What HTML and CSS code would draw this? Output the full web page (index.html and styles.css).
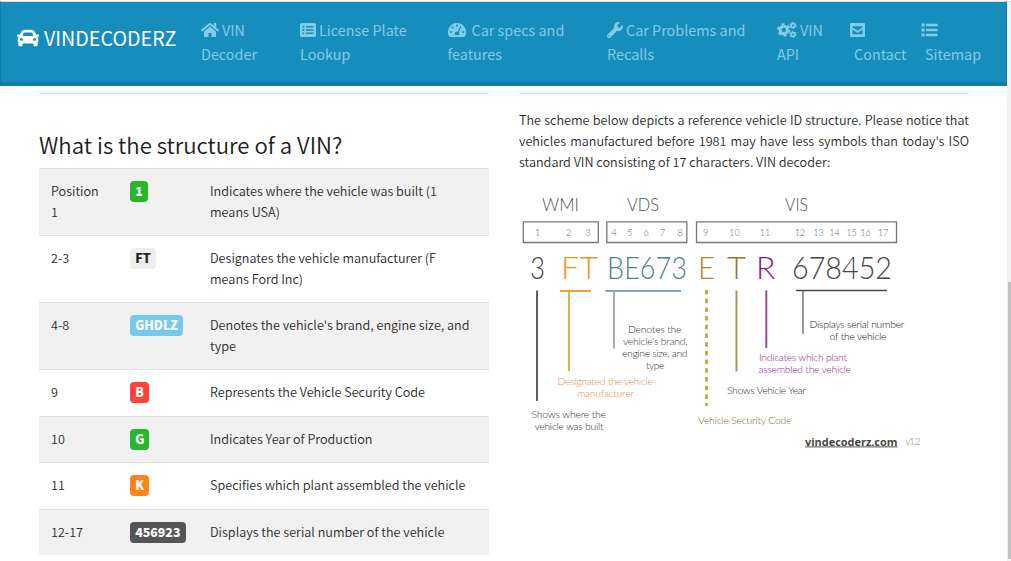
FILE: index.html
```html
<!DOCTYPE html>
<html lang="en">
<head>
<meta charset="utf-8">
<title>VINDECODERZ</title>
<link rel="stylesheet" href="styles.css">
</head>
<body>
<div class="page">
<header class="navbar">
  <a class="brand"><svg class="brand-icon" viewBox="0 0 512 512"><path fill-rule="evenodd" d="M499.99 176h-59.87l-16.64-41.6C406.38 91.63 365.57 64 319.5 64h-127c-46.06 0-86.88 27.63-103.99 70.4L71.87 176H12.01C4.2 176-1.53 183.34.37 190.91l6 24C7.7 220.25 12.5 224 18.01 224h20.07C24.65 235.73 16 252.78 16 272v48c0 16.12 6.16 30.67 16 41.93V416c0 17.67 14.33 32 32 32h32c17.67 0 32-14.33 32-32v-32h256v32c0 17.67 14.33 32 32 32h32c17.67 0 32-14.33 32-32v-54.07c9.84-11.25 16-25.8 16-41.93v-48c0-19.22-8.65-36.27-22.07-48H494c5.51 0 10.31-3.75 11.64-9.09l6-24c1.89-7.57-3.84-14.91-11.65-14.91zm-352.06-17.83c7.29-18.22 24.94-30.17 44.57-30.17h127c19.63 0 37.28 11.95 44.57 30.17L384 208H128l19.93-49.83zM96 319.8c-19.2 0-32-12.76-32-31.9S76.8 256 96 256s48 28.71 48 47.85-28.8 15.95-48 15.95zm320 0c-19.2 0-48 3.19-48-15.95S396.8 256 416 256s32 12.76 32 31.9-12.8 31.9-32 31.9z"/></svg><span>VINDECODERZ</span></a>
  <nav class="menu">
    <a class="item decoder"><span class="line"><svg class="ico w18" viewBox="0 0 576 512"><path d="M280.37 148.26L96 300.11V464a16 16 0 0 0 16 16l112.06-.29a16 16 0 0 0 15.92-16V368a16 16 0 0 1 16-16h64a16 16 0 0 1 16 16v95.64a16 16 0 0 0 16 16.05L464 480a16 16 0 0 0 16-16V300L295.67 148.26a12.19 12.19 0 0 0-15.3 0zM571.6 251.47L488 182.56V44.05a12 12 0 0 0-12-12h-56a12 12 0 0 0-12 12v72.61L318.47 43a48 48 0 0 0-61 0L4.34 251.47a12 12 0 0 0-1.6 16.9l25.5 31A12 12 0 0 0 45.15 301l235.22-193.74a12.19 12.19 0 0 1 15.3 0L530.9 301a12 12 0 0 0 16.9-1.6l25.5-31a12 12 0 0 0-1.7-16.93z"/></svg>VIN</span><span class="line">Decoder</span></a>
    <a class="item plate"><span class="line"><svg class="ico w16" viewBox="0 0 16 16"><path fill-rule="evenodd" d="M1.500 1h13A1.500 1.500 0 0 1 16 2.500v11A1.500 1.500 0 0 1 14.500 15h-13A1.500 1.500 0 0 1 0 13.500v-11A1.500 1.500 0 0 1 1.500 1zM2.500 3.800v1.800h1.800V3.800zM6 4v1.400h7.500V4zM2.500 7.100v1.800h1.800V7.100zM6 7.300v1.400h7.500V7.300zM2.500 10.400v1.800h1.800v-1.800zM6 10.600V12h7.500v-1.400z"/></svg>License Plate</span><span class="line">Lookup</span></a>
    <a class="item specs"><span class="line"><svg class="ico w18 wide" viewBox="0 0 18 16"><path fill-rule="evenodd" d="M9 1a9 9 0 0 0-7.800 13.500q.3.500.9.500h13.800q.6 0 .9-.5A9 9 0 0 0 9 1zM9 2.500a1.100 1.100 0 1 1 0 2.200 1.100 1.100 0 0 1 0-2.200zM4.500 4.400a1.100 1.100 0 1 1 0 2.200 1.100 1.100 0 0 1 0-2.200zM2.800 8.900a1.100 1.100 0 1 1 0 2.200 1.100 1.100 0 0 1 0-2.200zM15.200 8.900a1.100 1.100 0 1 1 0 2.200 1.100 1.100 0 0 1 0-2.200zM12.300 4l1 .4-2.500 6.200a2 2 0 0 1 0 2.500H7.200A2 2 0 0 1 9.600 10z"/></svg>Car specs and</span><span class="line">features</span></a>
    <a class="item recalls"><span class="line"><svg class="ico w16" viewBox="0 0 512 512"><path d="M507.730 109.100c-2.240-9.030-13.540-12.090-20.120-5.510l-74.360 74.360-67.880-11.310-11.310-67.880 74.360-74.360c6.620-6.620 3.430-17.900-5.660-20.160-47.380-11.740-99.550.91-136.580 37.930-39.640 39.640-50.550 97.100-34.050 147.200L18.740 402.760c-24.990 24.990-24.990 65.510 0 90.500 24.990 24.990 65.510 24.990 90.500 0l213.210-213.210c50.120 16.710 107.470 5.680 147.370-34.220 37.070-37.070 49.700-89.320 37.910-136.730zM64 472c-13.250 0-24-10.750-24-24 0-13.260 10.750-24 24-24s24 10.740 24 24c0 13.250-10.750 24-24 24z"/></svg>Car Problems and</span><span class="line">Recalls</span></a>
    <a class="item api"><span class="line"><svg class="ico w20" viewBox="0 0 20 16"><g class="gear"><circle cx="6.800" cy="8" r="3.700" stroke-width="3"/><circle cx="6.800" cy="8" r="5.700" stroke-width="2" stroke-dasharray="2.980 2.990"/><circle cx="16" cy="3.500" r="1.900" stroke-width="1.600"/><circle cx="16" cy="3.500" r="3" stroke-width="1.200" stroke-dasharray="1.570 1.570"/><circle cx="16" cy="12.500" r="1.900" stroke-width="1.600"/><circle cx="16" cy="12.500" r="3" stroke-width="1.200" stroke-dasharray="1.570 1.570"/></g></svg>VIN</span><span class="line">API</span></a>
    <a class="item contact"><span class="line"><svg class="ico w16" viewBox="0 0 16 16"><path fill-rule="evenodd" d="M1 1h13q1 0 1 1v12q0 1-1 1H1q-1 0-1-1V2q0-1 1-1zM2.500 4.200v1.200l5 3.400 5-3.400V4.200zM2.500 7.600v4.600h10V7.600l-5 3.500z"/></svg></span><span class="line indent">Contact</span></a>
    <a class="item sitemap"><span class="line"><svg class="ico w17" viewBox="0 0 17 16"><path d="M.5 1.500h3.200v3H.5zM5 1.700h11.500v2.500H5zM.5 6.500h3.200v3H.5zM5 6.700h11.500v2.500H5zM.5 11.500h3.200v3H.5zM5 11.700h11.500v2.500H5z"/></svg></span><span class="line indent">Sitemap</span></a>
  </nav>
</header>
<main class="content">
  <section class="column">
    <h2>What is the structure of a VIN?</h2>
    <table>
      <tr><td>Position<br>1</td><td><span class="badge green">1</span></td><td>Indicates where the vehicle was built (1<br>means USA)</td></tr>
      <tr><td>2-3</td><td><span class="badge light">FT</span></td><td>Designates the vehicle manufacturer (F<br>means Ford Inc)</td></tr>
      <tr><td>4-8</td><td><span class="badge sky">GHDLZ</span></td><td>Denotes the vehicle's brand, engine size, and<br>type</td></tr>
      <tr><td>9</td><td><span class="badge red">B</span></td><td>Represents the Vehicle Security Code</td></tr>
      <tr><td>10</td><td><span class="badge green">G</span></td><td>Indicates Year of Production</td></tr>
      <tr><td>11</td><td><span class="badge orange">K</span></td><td>Specifies which plant assembled the vehicle</td></tr>
      <tr><td>12-17</td><td><span class="badge dark">456923</span></td><td>Displays the serial number of the vehicle</td></tr>
    </table>
  </section>
  <section class="column">
    <p class="intro"><span>The scheme below depicts a reference vehicle ID structure. Please notice that</span><span>vehicles manufactured before 1981 may have less symbols than today's ISO</span><span class="last">standard VIN consisting of 17 characters. VIN decoder:</span></p>
    <svg class="scheme" viewBox="519 190 412 264" width="412" height="264">
      <g class="title"><text x="542" y="211" textLength="37" lengthAdjust="spacingAndGlyphs">WMI</text><text x="627" y="211" textLength="32" lengthAdjust="spacingAndGlyphs">VDS</text><text x="785" y="211" textLength="23" lengthAdjust="spacingAndGlyphs">VIS</text></g>
      <g class="box"><path d="M523.300 221.800h75v20.700h-75zM606.800 221.800h80v20.700h-80zM696.500 221.800h200v20.700h-200z"/></g>
      <g class="pos"><text x="537.500" y="236">1</text><text x="568.500" y="236">2</text><text x="588" y="236">3</text><text x="614" y="236">4</text><text x="629.500" y="236">5</text><text x="646" y="236">6</text><text x="662.500" y="236">7</text><text x="680" y="236">8</text><text x="705.500" y="236">9</text><text x="734.500" y="236">10</text><text x="765" y="236">11</text><text x="800" y="236">12</text><text x="818.500" y="236">13</text><text x="834.500" y="236">14</text><text x="851.500" y="236">15</text><text x="865.500" y="236">16</text><text x="883" y="236">17</text></g>
      <g class="code"><text class="c-gray" x="530" y="279" textLength="15" lengthAdjust="spacingAndGlyphs">3</text><text class="c-orange" x="561" y="279" textLength="37">FT</text><text class="c-teal" x="607" y="279" textLength="80" lengthAdjust="spacingAndGlyphs">BE673</text><text class="c-ochre" x="698" y="279" textLength="17" lengthAdjust="spacingAndGlyphs">E</text><text class="c-olive" x="727" y="279" textLength="19" lengthAdjust="spacingAndGlyphs">T</text><text class="c-purple" x="756" y="279">R</text><text class="c-gray" x="792" y="279" textLength="100" lengthAdjust="spacingAndGlyphs">678452</text></g>
      <g class="rules">
        <path stroke="#626262" stroke-width="2" d="M537 290.500V401"/>
        <path stroke="#e0a640" d="M560 291h31M569 291V371" stroke-width="1.800"/>
        <path stroke="#63859a" d="M605.500 291H681"/><path stroke="#9b9bb7" stroke-width="1.700" d="M614 291v57.500"/>
        <path stroke="#c99d33" stroke-width="2.600" stroke-dasharray="4.500 4.200" d="M706.500 290v116"/>
        <path stroke="#b29159" stroke-width="2" d="M736.500 290.500v81"/>
        <path stroke="#9b46a0" stroke-width="2" d="M766.300 290.500v57.500"/>
        <path stroke="#484848" d="M796 290.500h91"/><path stroke="#858585" stroke-width="1.700" d="M803 291v43"/>
      </g>
      <g class="note">
        <g class="n-gray"><text x="628" y="332.500" textLength="53.500">Denotes the</text><text x="623" y="344.800" textLength="64.500">vehicle's brand,</text><text x="622" y="357.100" textLength="65.500">engine size, and</text><text x="646" y="369.300" textLength="18.500">type</text></g>
        <g class="n-orange"><text x="557.500" y="384.800" textLength="95.500">Designated the vehicle</text><text x="577" y="397.100" textLength="57">manufacturer</text></g>
        <g class="n-gray"><text x="531.500" y="418" textLength="74.500">Shows where the</text><text x="534.500" y="430.300" textLength="69">vehicle was built</text></g>
        <g class="n-dark"><text x="809.500" y="328" textLength="95">Displays serial number</text><text x="829.500" y="340.300" textLength="57">of the vehicle</text></g>
        <g class="n-purple"><text x="759" y="360.800" textLength="88">Indicates which plant</text><text x="758.500" y="373.100" textLength="92.500">assembled the vehicle</text></g>
        <g class="n-gray"><text x="727" y="394" textLength="79">Shows Vehicle Year</text></g>
        <g class="n-olive"><text x="698" y="424.300" textLength="93.500">Vehicle Security Code</text></g>
        <text class="version" x="905.500" y="445" textLength="15">v1.2</text>
      </g>
      <text class="site" x="805" y="446" textLength="92.500" lengthAdjust="spacingAndGlyphs">vindecoderz.com</text><path stroke="#555" d="M805 446.900h92.500"/>
    </svg>
  </section>
</main>
</div>
<aside class="scrollbar"><div class="thumb"></div></aside>
</body>
</html>
```
FILE: styles.css
```css
* { box-sizing: border-box; }
body { margin: 0; width: 1011px; height: 561px; overflow: hidden; display: flex; background: #fff; color: #2c2c2c; font: 350 12.640px/21px "Noto Sans CJK SC", sans-serif; }
.page { width: 1007px; padding-top: 1px; }
.scrollbar { width: 4px; margin-top: 1px; background: #f1f1f1; padding: 280px 0 2px 1px; border-top: 1px solid #ddd; }
.thumb { height: 277px; background: #c1c1c1; }
.navbar { height: 85px; display: flex; background: #178dbb; border: solid #137ca5; border-width: 0 1px 4px 1px; border-top: 1px solid #dcdcdc; padding: 16px 0 0 15px; color: #fff; font-weight: 400; }
.brand { display: flex; align-items: center; gap: 5px; width: 185px; height: 40px; padding-left: 1px; font-size: 19.700px; line-height: 30px; }
.brand-icon { width: 22px; height: 22px; fill: #fff; }
.menu { display: flex; font-size: 14.400px; line-height: 24px; color: #81cce9; }
.item { display: block; white-space: nowrap; }
.line { display: flex; align-items: center; height: 24px; }
.indent { padding-left: 4px; }
.ico { height: 16px; margin-right: 3px; fill: currentColor; flex: none; }
.w16 { width: 16px; } .w17 { width: 17px; } .w18 { width: 18px; } .w20 { width: 20px; }
.wide { margin-right: 6px; }
.gear { fill: none; stroke: currentColor; }
.decoder { width: 99px; } .plate { width: 147.500px; } .specs { width: 159.500px; } .recalls { width: 170px; } .api { width: 73px; } .contact { width: 71px; } .sitemap { width: 70px; }
.content { display: flex; gap: 30px; padding: 7px 38px 0 39px; }
.column { width: 450px; border-top: 1px solid #dfdfdf; }
h2 { margin: 35px 0 9px; height: 30px; font-size: 22.200px; line-height: 30px; font-weight: 350; color: #1c1c1c; white-space: nowrap; }
table { width: 450px; border-collapse: separate; border-spacing: 0; table-layout: fixed; }
td { padding: 11px 12px 13px; border-top: 1px solid #dee2e6; vertical-align: top; height: 46.500px; white-space: nowrap; }
td:nth-child(1) { width: 79px; } td:nth-child(2) { width: 80px; }
tr:nth-child(odd) { background: #f1f1f1; }
td:nth-child(2) { padding: 12px 12px 12px; }
.badge { display: block; width: max-content; height: 21px; padding: 0 5.200px; border-radius: 4px; font-size: 12.400px; font-weight: 900; line-height: 21px; color: #fff; }
.green { background: #28b62c; } .light { background: #eee; color: #222; } .sky { background: #75caeb; } .red { background: #ff4136; } .orange { background: #ff851b; } .dark { background: #555; }
.intro { margin: 15px 0 18px; }
.intro span { display: block; text-align: justify; text-align-last: justify; white-space: nowrap; }
.intro .last { text-align-last: left; }
.scheme { display: block; font-family: Lato, sans-serif; font-weight: 300; }
.title { font-size: 18px; fill: #555; }
.box { fill: none; stroke: #777; stroke-width: 1.300; }
.pos { font-size: 9px; fill: #666; text-anchor: middle; }
.code { font-size: 32px; }
.c-gray { fill: #444; } .c-orange { fill: #f3941d; } .c-teal { fill: #4c8389; } .c-ochre { fill: #bd8029; } .c-olive { fill: #9b7430; } .c-purple { fill: #8b148b; }
.rules { fill: none; stroke-width: 1.500; }
.note { font-size: 10.400px; }
.n-gray { fill: #333; } .n-dark { fill: #111; } .n-orange { fill: #e08d50; } .n-purple { fill: #8f2095; } .n-olive { fill: #80642c; }
.version { font-size: 9px; fill: #777; }
.site { font: bold 11px "Open Sans", sans-serif; fill: #444; }
```
